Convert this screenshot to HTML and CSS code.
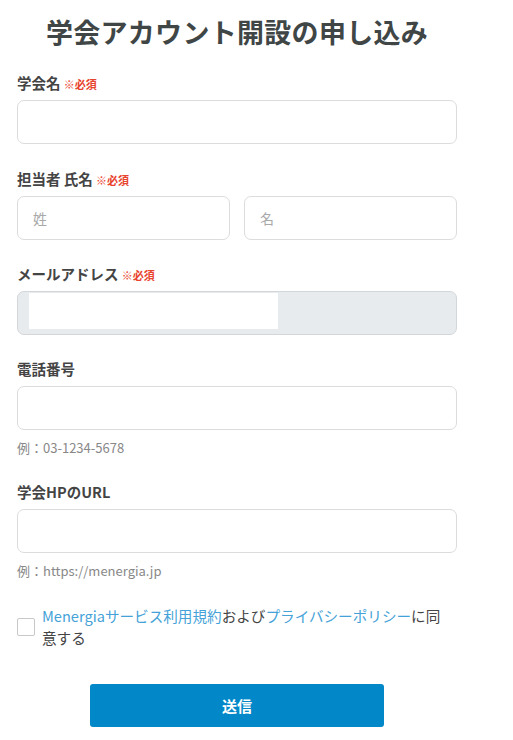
FILE: index.html
```html
<!DOCTYPE html>
<html lang="ja">
<head>
<meta charset="utf-8">
<title>学会アカウント開設の申し込み</title>
<link rel="stylesheet" href="styles.css">
</head>
<body>
<main class="page">
  <h1 class="title">学会アカウント開設の申し込み</h1>
  <form class="form">
    <div class="field field-first">
      <label class="label">学会名 <span class="req">※必須</span></label>
      <input class="input" type="text">
    </div>
    <div class="field">
      <label class="label">担当者 氏名 <span class="req">※必須</span></label>
      <div class="row">
        <input class="input" type="text" placeholder="姓">
        <input class="input" type="text" placeholder="名">
      </div>
    </div>
    <div class="field">
      <label class="label">メールアドレス <span class="req">※必須</span></label>
      <div class="input input-disabled"><div class="masked"></div></div>
    </div>
    <div class="field">
      <label class="label">電話番号</label>
      <input class="input" type="text">
      <p class="hint">例：03-1234-5678</p>
    </div>
    <div class="field">
      <label class="label">学会HPのURL</label>
      <input class="input" type="text">
      <p class="hint">例：https://menergia.jp</p>
    </div>
    <div class="agree">
      <span class="checkbox"></span>
      <p class="agree-text"><a class="link">Menergiaサービス利用規約</a>および<a class="link">プライバシーポリシー</a>に同意する</p>
    </div>
    <div class="actions">
      <button class="submit" type="button">送信</button>
    </div>
  </form>
</main>
</body>
</html>
```
FILE: styles.css
```css
* { box-sizing: border-box; }
html, body { margin: 0; padding: 0; background: #fff; }
body {
  font-family: "Noto Sans CJK JP", "Noto Sans", sans-serif;
  color: #444;
}
.page {
  width: 440px;
  margin-left: 17px;
  padding-top: 13px;
}
.title {
  margin: 0;
  font-size: 27px;
  line-height: 38px;
  font-weight: 700;
  text-align: center;
  color: #404646;
  letter-spacing: 0.3px;
}
.form { margin-top: 22px; }
.field { margin-bottom: 24px; }
.field-first { margin-bottom: 25px; }
.label {
  display: block;
  height: 20px;
  font-size: 14.5px;
  line-height: 20px;
  font-weight: 700;
  color: #444;
  margin-bottom: 7px;
}
.req {
  font-size: 11px;
  line-height: 1;
  color: #e8432d;
  font-weight: 700;
}
.input {
  display: block;
  width: 100%;
  height: 44px;
  border: 1px solid #dcdcdc;
  border-radius: 7px;
  background: #fff;
  padding: 0 15px;
  font-family: inherit;
  font-size: 14px;
  color: #444;
  outline: none;
}
.input::placeholder { color: #a8a8a8; }
.row {
  display: flex;
  gap: 14px;
}
.input-disabled {
  background: #e7ebee;
  border-color: #d3d7da;
  padding: 1px 0 5px 11px;
}
.masked {
  width: 249px;
  height: 36px;
  background: #fff;
}
.hint {
  margin: 8px 0 0;
  font-size: 13px;
  line-height: 20px;
  color: #888;
}
.agree {
  display: flex;
  align-items: center;
  gap: 7px;
  margin-top: 20px;
}
.checkbox {
  flex: none;
  width: 18px;
  height: 18px;
  border: 1px solid #c8c8c8;
  border-radius: 2px;
  background: #fff;
}
.agree-text {
  margin: 0;
  font-size: 14.6px;
  line-height: 22px;
  color: #444;
  padding-right: 12px;
}
.link { color: #45a2d8; text-decoration: none; }
.actions {
  display: flex;
  justify-content: center;
  margin-top: 35px;
}
.submit {
  width: 294px;
  height: 43px;
  border: none;
  border-radius: 3px;
  background: #0288c8;
  color: #fff;
  font-family: inherit;
  font-size: 15px;
  font-weight: 700;
  cursor: pointer;
}
```
